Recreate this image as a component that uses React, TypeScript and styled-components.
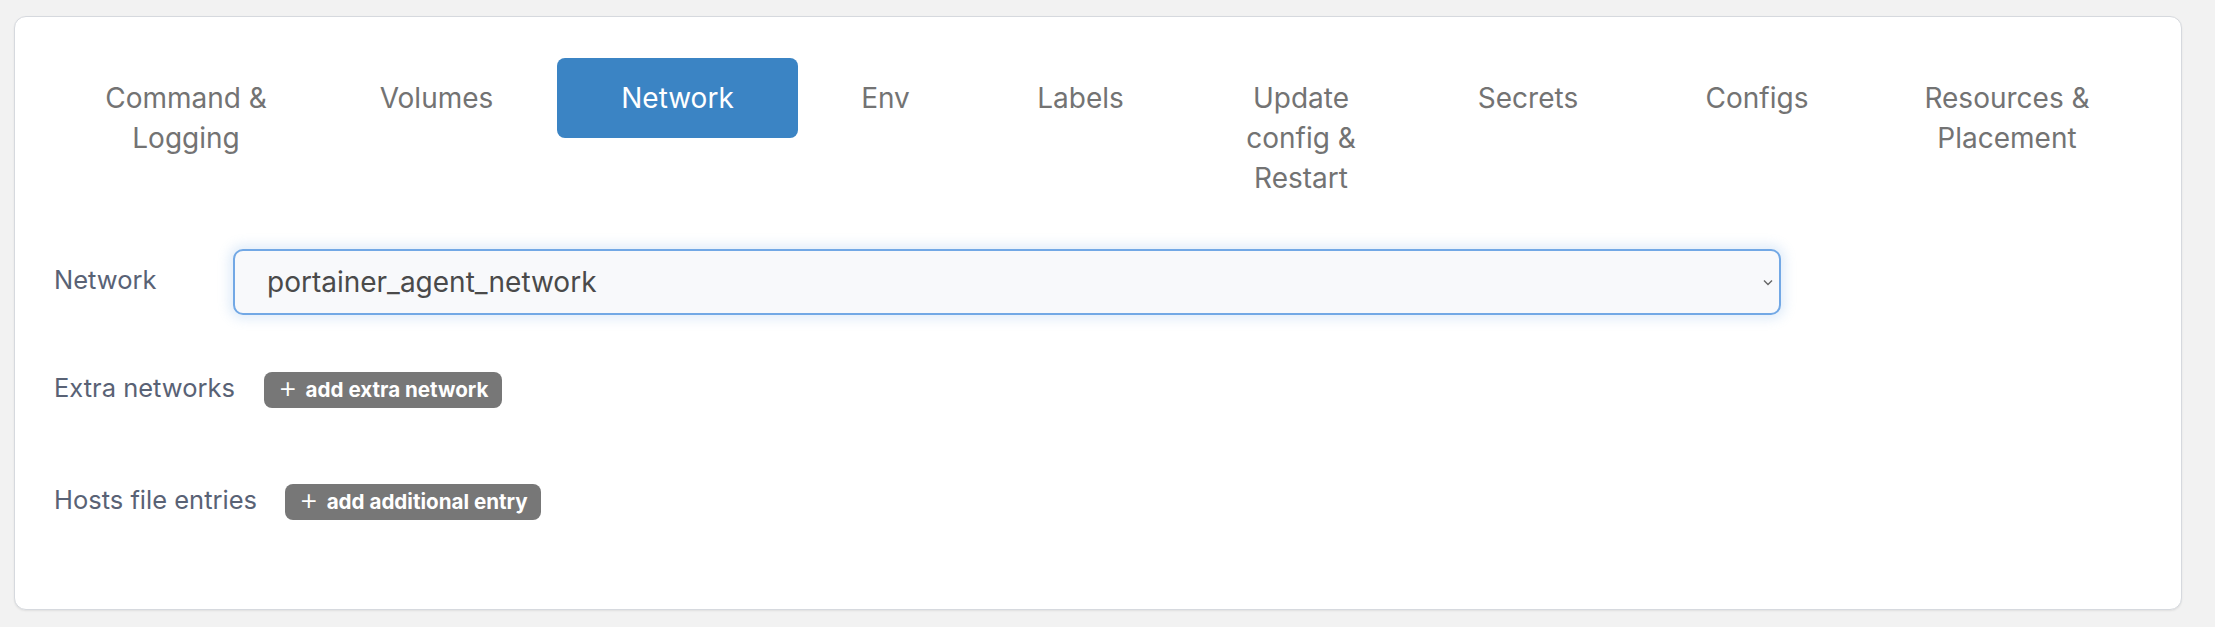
import React from "react";
import styled, { createGlobalStyle } from "styled-components";

const GlobalStyle = createGlobalStyle`
  html, body {
    margin: 0;
    padding: 0;
    background: #f2f2f2;
  }
  body {
    font-family: Inter, "Noto Sans", "Liberation Sans", sans-serif;
  }
`;

const Page = styled.div`
  padding: 16px 33px 17px 14px;
  background: #f2f2f2;
`;

const Card = styled.div`
  background: #ffffff;
  border: 1px solid #d6d9de;
  border-radius: 12px;
  box-shadow: 0 1px 2px rgba(0, 0, 0, 0.08);
  padding: 41px 40px 89px 41px;
  box-sizing: border-box;
`;

const Tabs = styled.ul`
  display: flex;
  align-items: flex-start;
  list-style: none;
  margin: 0;
  padding: 0;
`;

const Tab = styled.li<{ $w: number; $active?: boolean }>`
  flex: 0 0 ${(p) => p.$w}px;
  box-sizing: border-box;
  padding: 20px 40px;
  text-align: center;
  font-size: 28px;
  line-height: 40px;
  color: ${(p) => (p.$active ? "#ffffff" : "#737373")};
  background: ${(p) => (p.$active ? "#3b84c4" : "transparent")};
  border-radius: 8px;
`;

const Form = styled.div`
  display: flex;
  flex-direction: column;
  margin: 31px 0 0 -2px;
`;

const FieldRow = styled.div<{ $gap: number }>`
  display: flex;
  align-items: center;
  height: ${(p) => (p.$gap === 0 ? 66 : 36)}px;
  margin-top: ${(p) => p.$gap}px;
`;

const Label = styled.span<{ $w?: number }>`
  font-size: 25.5px;
  line-height: 30px;
  color: #596275;
  margin-bottom: 5px;
  ${(p) => (p.$w ? `flex: 0 0 ${p.$w}px;` : "")}
`;

const SelectBox = styled.div`
  flex: 0 0 1548px;
  height: 66px;
  box-sizing: border-box;
  display: flex;
  align-items: center;
  justify-content: space-between;
  padding: 0 6px 0 32px;
  background: #f8f9fb;
  border: 2px solid #72a8e5;
  border-radius: 10px;
  box-shadow: 0 0 12px 4px rgba(114, 168, 229, 0.22);
  font-size: 28px;
  color: #4a4a4a;
`;

const Chevron = styled.svg`
  width: 10px;
  height: 7px;
  flex: 0 0 auto;
`;

const AddButton = styled.button<{ $ml: number }>`
  display: inline-flex;
  align-items: center;
  gap: 8px;
  height: 36px;
  margin-left: ${(p) => p.$ml}px;
  padding: 0 13px 0 14px;
  border: none;
  border-radius: 8px;
  background: #777777;
  color: #ffffff;
  font-family: Inter, "Noto Sans", "Liberation Sans", sans-serif;
  font-weight: 700;
  font-size: 20.6px;
  line-height: 1;
`;

const Plus = styled.span`
  font-weight: 300;
  font-size: 30px;
  line-height: 1;
  margin-top: -7px;
`;

const tabs = [
  { label: "Command & Logging", w: 260 },
  { label: "Volumes", w: 241 },
  { label: "Network", w: 241, active: true },
  { label: "Env", w: 175 },
  { label: "Labels", w: 215 },
  { label: "Update config & Restart", w: 226 },
  { label: "Secrets", w: 228 },
  { label: "Configs", w: 230 },
  { label: "Resources & Placement", w: 270 },
];

export default function App() {
  return (
    <>
      <GlobalStyle />
      <Page>
        <Card>
          <Tabs>
            {tabs.map((t) => (
              <Tab key={t.label} $w={t.w} $active={t.active}>
                {t.label}
              </Tab>
            ))}
          </Tabs>
          <Form>
            <FieldRow $gap={0}>
              <Label $w={179}>Network</Label>
              <SelectBox>
                <span>portainer_agent_network</span>
                <Chevron viewBox="0 0 10 7">
                  <path d="M1 1.5 L5 5.5 L9 1.5" fill="none" stroke="#666" strokeWidth="1.4" />
                </Chevron>
              </SelectBox>
            </FieldRow>
            <FieldRow $gap={57}>
              <Label>Extra networks</Label>
              <AddButton $ml={29}>
                <Plus>+</Plus>
                add extra network
              </AddButton>
            </FieldRow>
            <FieldRow $gap={76}>
              <Label>Hosts file entries</Label>
              <AddButton $ml={28}>
                <Plus>+</Plus>
                add additional entry
              </AddButton>
            </FieldRow>
          </Form>
        </Card>
      </Page>
    </>
  );
}
